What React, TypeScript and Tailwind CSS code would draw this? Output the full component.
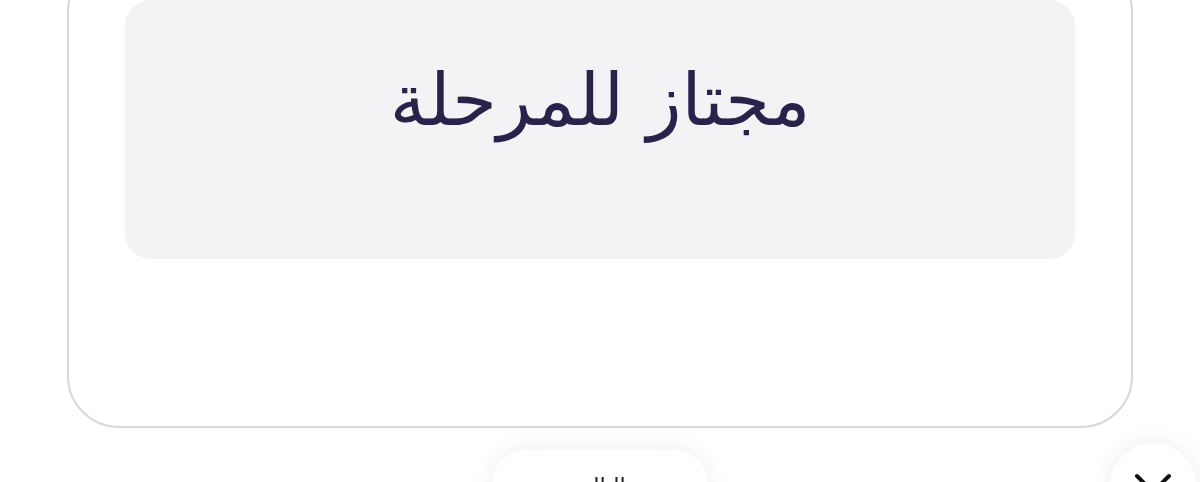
export default function App() {
  return (
    <div
      dir="rtl"
      className="relative h-[482px] w-[1200px] overflow-hidden bg-white"
      style={{ fontFamily: '"DejaVu Sans", "Noto Sans", sans-serif' }}
    >
      <div className="px-[67px]">
        <div className="-mt-[40px] h-[468px] rounded-b-[52px] rounded-t-[52px] border-2 border-[#d6d6dc] px-[56px] pt-[38px]">
          <div className="flex h-[259px] items-center justify-center rounded-[26px] bg-[#f3f3f6] pb-[60px]">
            <span className="text-[72px] leading-none text-[#28234b]">مجتاز للمرحلة</span>
          </div>
        </div>
      </div>

      <div className="mt-[22px] flex justify-center">
        <div className="flex h-[70px] w-[214px] justify-center rounded-[32px] bg-white pt-[26px] shadow-[0_0_24px_rgba(0,0,0,0.08)]">
          <span className="text-[22px] leading-none text-[#1d1d1f]">التالي</span>
        </div>
      </div>

      <button
        type="button"
        className="absolute left-[1110px] top-[443px] flex h-[86px] w-[86px] items-start justify-center rounded-full bg-white pt-[30px] shadow-[0_0_24px_rgba(0,0,0,0.08)]"
      >
        <svg width="38" height="38" viewBox="0 0 38 38" fill="none">
          <path d="M3 3L35 35M35 3L3 35" stroke="#111" strokeWidth="4" strokeLinecap="round" />
        </svg>
      </button>
    </div>
  );
}
